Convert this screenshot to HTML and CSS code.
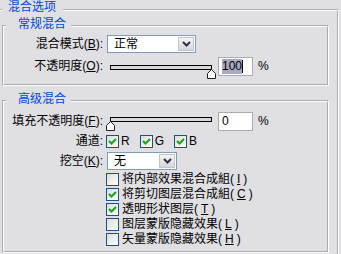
FILE: index.html
```html
<!DOCTYPE html>
<html>
<head>
<meta charset="utf-8">
<link rel="stylesheet" href="styles.css">
</head>
<body>
<fieldset class="outer">
  <legend class="outer-title">混合选项</legend>

  <fieldset class="group g1">
    <legend class="group-title">常规混合</legend>
    <div class="row r-mode">
      <span class="lbl">混合模式(<u>B</u>):</span>
      <div class="select s-mode"><span class="val">正常</span><span class="drop"><svg width="9" height="6" viewBox="0 0 9 6"><polyline points="1,1 4.5,4.5 8,1" fill="none" stroke="#303040" stroke-width="2"/></svg></span></div>
    </div>
    <div class="row r-op">
      <span class="lbl">不透明度(<u>O</u>):</span>
      <div class="slider"><div class="track"></div><svg class="thumb at-max" width="9" height="10" viewBox="0 0 9 10"><path d="M4.5 0.5 L8.5 4.5 L8.5 9.5 L0.5 9.5 L0.5 4.5 Z" fill="#fff" stroke="#202020" stroke-width="1"/></svg></div>
      <div class="num"><span class="hl">100</span><span class="caret"></span></div>
      <span class="pct">%</span>
    </div>
  </fieldset>

  <fieldset class="group g2">
    <legend class="group-title">高级混合</legend>
    <div class="row r-fill">
      <span class="lbl">填充不透明度(<u>F</u>):</span>
      <div class="slider"><div class="track"></div><svg class="thumb at-min" width="9" height="10" viewBox="0 0 9 10"><path d="M4.5 0.5 L8.5 4.5 L8.5 9.5 L0.5 9.5 L0.5 4.5 Z" fill="#fff" stroke="#202020" stroke-width="1"/></svg></div>
      <div class="num"><span>0</span></div>
      <span class="pct">%</span>
    </div>
    <div class="row r-chan">
      <span class="lbl">通道:</span>
      <div class="chans">
        <span class="chan"><span class="cb on"><svg width="11" height="11" viewBox="0 0 11 11"><polyline points="2,5 4.5,7.5 9,3" fill="none" stroke="#21a121" stroke-width="2.2"/></svg></span>R</span>
        <span class="chan"><span class="cb on"><svg width="11" height="11" viewBox="0 0 11 11"><polyline points="2,5 4.5,7.5 9,3" fill="none" stroke="#21a121" stroke-width="2.2"/></svg></span>G</span>
        <span class="chan"><span class="cb on"><svg width="11" height="11" viewBox="0 0 11 11"><polyline points="2,5 4.5,7.5 9,3" fill="none" stroke="#21a121" stroke-width="2.2"/></svg></span>B</span>
      </div>
    </div>
    <div class="row r-ko">
      <span class="lbl">挖空(<u>K</u>):</span>
      <div class="select s-ko"><span class="val">无</span><span class="drop"><svg width="9" height="6" viewBox="0 0 9 6"><polyline points="1,1 4.5,4.5 8,1" fill="none" stroke="#303040" stroke-width="2"/></svg></span></div>
    </div>
    <div class="checks">
      <div class="check"><span class="cb"></span>将内部效果混合成組(<u>I</u>)</div>
      <div class="check"><span class="cb on"><svg width="11" height="11" viewBox="0 0 11 11"><polyline points="2,5 4.5,7.5 9,3" fill="none" stroke="#21a121" stroke-width="2.2"/></svg></span>将剪切图层混合成組(<u>C</u>)</div>
      <div class="check"><span class="cb on"><svg width="11" height="11" viewBox="0 0 11 11"><polyline points="2,5 4.5,7.5 9,3" fill="none" stroke="#21a121" stroke-width="2.2"/></svg></span>透明形状图层(<u>T</u>)</div>
      <div class="check"><span class="cb"></span>图层蒙版隐藏效果(<u>L</u>)</div>
      <div class="check"><span class="cb"></span>矢量蒙版隐藏效果(<u>H</u>)</div>
    </div>
  </fieldset>
</fieldset>
</body>
</html>
```
FILE: styles.css
```css
html, body {
  margin: 0;
  padding: 0;
}
body {
  width: 341px;
  height: 254px;
  overflow: hidden;
  background: #e0dfe3;
  color: #000;
  font-family: "Liberation Sans", "Noto Sans CJK SC", sans-serif;
  font-size: 12px;
  line-height: 15px;
}
fieldset {
  min-width: 0;
  margin: 0;
}
legend {
  line-height: 15px;
  color: #0046d5;
}
.outer {
  margin: 0 2px 0 0;
  padding: 0 8px 1px 2px;
  border: 0;
  border-top: 2px groove #fff;
  border-right: 2px groove #fff;
}
.outer-title {
  margin: 0;
  padding: 0 7px 5px 6px;
}
.group {
  border: 2px groove #fff;
  padding: 0;
}
.group-title {
  margin: 0 0 0 2px;
  padding: 0 5px 3px 12px;
}
.g1 {
  margin-top: -3px;
  padding-bottom: 8px;
}
.g2 {
  margin-top: 6px;
  padding-top: 2px;
  padding-bottom: 4px;
}
.row {
  display: flex;
  align-items: center;
}
.lbl {
  width: 99px;
  margin-right: 3px;
  text-align: right;
  white-space: nowrap;
}
.r-mode { height: 18px; }
.r-op { height: 19px; margin-top: 4px; }
.r-fill { height: 19px; }
.r-chan { height: 20px; }
.r-ko { height: 18px; margin-top: 1px; }

.select {
  box-sizing: border-box;
  height: 18px;
  margin-left: 1px;
  border: 1px solid #7f9db9;
  background: #fff;
  display: flex;
}
.s-mode { width: 89px; }
.s-ko { width: 70px; }
.val {
  flex: 1;
  padding-left: 6px;
  line-height: 16px;
}
.drop {
  box-sizing: border-box;
  width: 16px;
  margin: 1px 1px 1px 0;
  border: 1px solid #c4c4cc;
  background: linear-gradient(#f4f4f6, #d6d6dc);
  display: flex;
  align-items: center;
  justify-content: center;
}
.slider {
  position: relative;
  width: 110px;
  height: 14px;
  align-self: flex-start;
  margin-top: 5px;
}
.r-op .slider { margin-top: 8px; }
.track {
  box-sizing: border-box;
  margin: 0 4px;
  height: 5px;
  border: 1px solid #000;
  background: #d8d8d8;
}
.thumb {
  position: absolute;
  top: 4px;
}
.thumb.at-max { right: 0; }
.thumb.at-min { left: 0; }
.num {
  box-sizing: border-box;
  width: 35px;
  height: 19px;
  margin-left: 2px;
  padding-left: 3px;
  border: 1px solid #a5acb2;
  background: #fff;
  display: flex;
  align-items: center;
  line-height: 15px;
}
.hl {
  background: #a8a8c0;
}
.caret {
  width: 1px;
  height: 13px;
  background: #000;
}
.pct {
  margin-left: 5px;
}
.chans {
  display: flex;
  gap: 10px;
}
.chan {
  display: flex;
  align-items: center;
  gap: 2px;
}
.cb {
  box-sizing: border-box;
  width: 13px;
  height: 13px;
  border: 1px solid #1c5180;
  background: linear-gradient(135deg, #dcdcd7, #fff);
  display: inline-flex;
  flex: none;
}
.checks {
  margin-top: 2px;
  margin-left: 102px;
}
.check {
  height: 15px;
  display: flex;
  align-items: center;
  gap: 3px;
  white-space: nowrap;
}
```
